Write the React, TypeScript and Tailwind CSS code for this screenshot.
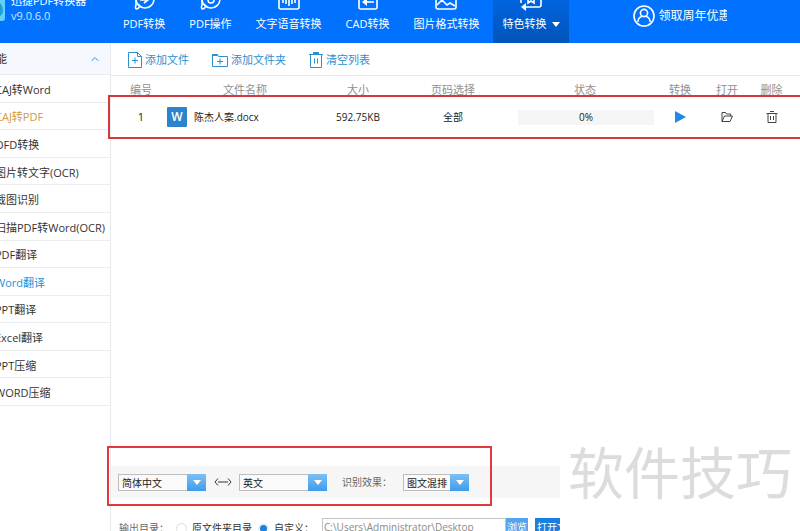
import type { ReactNode } from "react";
import { ChevronUp } from "lucide-react";

const TABS: { label: string; icon: ReactNode; active?: boolean }[] = [
  {
    label: "PDF转换",
    icon: (
      <>
        <path d="M3 2v14c-2 5 2 5 4 1" />
        <path d="M3 10a9 9 0 0 0 18 0M5 15q3 4 7 4" />
        <path d="M7 11h7M11 7l4 4-4 3" />
      </>
    ),
  },
  {
    label: "PDF操作",
    icon: (
      <>
        <path d="M3 2v14c-2 5 2 5 4 1" />
        <path d="M3 10a9 9 0 0 0 18 0M5 15q3 4 7 4" />
        <circle cx="12" cy="11" r="3" />
      </>
    ),
  },
  {
    label: "文字语音转换",
    icon: (
      <>
        <rect x="1" y="2" width="20" height="18" rx="2" />
        <path d="M5 10v4M8 8v7M11 9v8M14 8v7M17 10v4" />
      </>
    ),
  },
  {
    label: "CAD转换",
    icon: (
      <>
        <rect x="2" y="2" width="18" height="18" rx="2" />
        <path d="M17 13H9" />
        <path d="M10 9v8l-5-4z" fill="white" stroke="none" />
      </>
    ),
  },
  {
    label: "图片格式转换",
    icon: (
      <>
        <rect x="1" y="2" width="20" height="18" rx="2" />
        <path d="M2 16l5-5 5 5 3-2 5 3" />
      </>
    ),
  },
  {
    label: "特色转换",
    active: true,
    icon: (
      <>
        <path d="M21 6v10q0 2-2 2H3M1 14V6" />
        <path d="M6 14v8l-5-4z" fill="white" stroke="none" />
        <path d="M8 8v6l3-2 3 2V8" />
      </>
    ),
  },
];

const FEATURES: { label: string; tone?: string }[] = [
  { label: "CAJ转Word" },
  { label: "CAJ转PDF", tone: "text-[#d09a45]" },
  { label: "OFD转换" },
  { label: "图片转文字(OCR)" },
  { label: "截图识别" },
  { label: "扫描PDF转Word(OCR)" },
  { label: "PDF翻译" },
  { label: "Word翻译", tone: "text-[#2b8fd8]" },
  { label: "PPT翻译" },
  { label: "Excel翻译" },
  { label: "PPT压缩" },
  { label: "WORD压缩" },
];

export default function App() {
  return (
    <div className="relative flex h-screen flex-col overflow-hidden bg-white font-['Open_Sans','Noto_Sans_CJK_SC',sans-serif] text-[11px] leading-4 text-[#333]">
      <TopBar />
      <div className="flex min-h-0 flex-1">
        <Sidebar />
        <main className="flex min-w-0 flex-1 flex-col">
          <Toolbar />
          <FileTable />
          <Options />
        </main>
      </div>
      <div className="pointer-events-none absolute -right-1 left-[108px] top-[95px] h-[44px] border-2 border-[#d23b3b]" />
      <div className="pointer-events-none absolute bottom-[25px] left-[107px] h-[60px] w-[385px] border-2 border-[#e03a3e]" />
      <div className="pointer-events-none absolute bottom-[25px] right-2 text-[56px] leading-[68px] text-[#dcdcdc]">
        软件技巧
      </div>
    </div>
  );
}

function TopBar() {
  return (
    <header className="flex h-[43px] shrink-0 bg-[#0072ff] text-white">
      <div className="flex w-[111px] shrink-0 items-end gap-[6px] overflow-hidden">
        <svg viewBox="0 0 5 30" className="mb-[22px] h-[30px] w-[5px] shrink-0" fill="none">
          <path d="M0 0h5v27q0 3-3 3H0z" fill="#62d0fb" />
          <path d="M0 12q3 3 3 7t-3 6" fill="#1ba3d8" />
        </svg>
        <div className="mb-[20px] whitespace-nowrap">
          <div className="leading-[15px]">迅捷PDF转换器</div>
          <div className="leading-[15px] text-[#cfe5ff]">v9.0.6.0</div>
        </div>
      </div>
      <nav className="flex shrink-0">
        {TABS.map((tab) => (
          <button
            key={tab.label}
            type="button"
            className={`flex h-[43px] flex-col items-center justify-end overflow-hidden pb-[11px] ${
              tab.active ? "ml-[2px] bg-linear-to-b from-[#0064e0] to-[#0055b8] px-[9px]" : "px-[12px]"
            }`}
          >
            <svg
              viewBox="0 0 22 24"
              className="mb-[3px] h-[24px] w-[22px] shrink-0"
              fill="none"
              stroke="white"
              strokeWidth="1.6"
            >
              {tab.icon}
            </svg>
            <span className="flex items-center gap-[6px] whitespace-nowrap">
              {tab.label}
              {tab.active && (
                <svg viewBox="0 0 8 5" className="h-[5px] w-[8px]" fill="white">
                  <path d="M0 0h8L4 5z" />
                </svg>
              )}
            </span>
          </button>
        ))}
      </nav>
      <a href="#account" className="ml-[64px] mt-[5px] flex h-[22px] items-center gap-[3px] text-[12px]">
        <svg viewBox="0 0 22 22" className="size-[22px]" fill="none" stroke="white" strokeWidth="1.6">
          <circle cx="11" cy="11" r="10" />
          <circle cx="11" cy="8" r="3.6" />
          <path d="M5 17c0-3 2-5 4-5.500M17 17c0-3-2-5-4-5.500" />
        </svg>
        <span className="w-[69px] overflow-hidden whitespace-nowrap">领取周年优惠</span>
      </a>
    </header>
  );
}

function Sidebar() {
  return (
    <aside className="w-[111px] shrink-0 overflow-hidden border-r border-[#e6eaee]">
      <button
        type="button"
        className="flex h-[32px] w-full items-center justify-between border-b border-[#e6eaee] bg-[#f5f9fe] pr-[9px] pt-px"
      >
        <span className="-ml-[15px]">功能</span>
        <ChevronUp className="size-[12px] text-[#2b8fd8]" strokeWidth={2} />
      </button>
      <ul className="grid h-[331px] auto-rows-fr">
        {FEATURES.map((item) => (
          <li key={item.label} className="flex items-center border-b border-[#e9edf0] pt-[3px]">
            <a href="#feature" className={`-ml-[5px] whitespace-nowrap ${item.tone ?? ""}`}>
              {item.label}
            </a>
          </li>
        ))}
      </ul>
    </aside>
  );
}

function Toolbar() {
  const button = "flex items-center gap-[3px] whitespace-nowrap";
  return (
    <div className="flex h-[33px] shrink-0 items-center gap-[23px] border-b border-[#e6eaee] pl-[17px] pt-[2px] text-[#2b8fd0]">
      <button type="button" className={button}>
        <svg viewBox="0 0 14 16" className="h-[16px] w-[14px]" fill="none" stroke="currentColor">
          <path d="M.5.5h9l4 4v11H.5zM9.500.5v4h4M7 5.500v6M4 8.500h6" />
        </svg>
        添加文件
      </button>
      <button type="button" className={button}>
        <svg viewBox="0 0 16 14" className="h-[14px] w-[16px]" fill="none" stroke="currentColor">
          <path d="M.5 1.500h5l1 2h9v10H.5zM8 5.500v6M5 8.500h6" />
          <path d="M.5 2h5" strokeWidth="2" />
        </svg>
        添加文件夹
      </button>
      <button type="button" className={button}>
        <svg viewBox="0 0 14 16" className="h-[16px] w-[14px]" fill="none" stroke="currentColor">
          <path d="M1.500 3v12.500h11V3M0 2.500h14M5.500 6.500v5M8.500 6.500v5" />
          <path d="M4 1h6" strokeWidth="2" />
        </svg>
        清空列表
      </button>
    </div>
  );
}

function FileTable() {
  return (
    <table className="w-full table-fixed text-center">
      <colgroup>
        <col className="w-[56px]" />
        <col className="w-[152px]" />
        <col className="w-[78px]" />
        <col className="w-[112px]" />
        <col />
        <col className="w-[38px]" />
        <col className="w-[56px]" />
        <col className="w-[45px]" />
      </colgroup>
      <thead className="text-[#909090]">
        <tr className="h-[28px]">
          <th className="pl-1 font-normal">编号</th>
          <th className="pl-1 font-normal">文件名称</th>
          <th className="font-normal">大小</th>
          <th className="font-normal">页码选择</th>
          <th className="font-normal">状态</th>
          <th className="font-normal">转换</th>
          <th className="font-normal">打开</th>
          <th className="pr-3 font-normal">删除</th>
        </tr>
      </thead>
      <tbody className="text-[10px] text-[#222]">
        <tr className="h-[26px]">
          <td className="pl-1 text-[11px]">1</td>
          <td>
            <div className="flex items-center gap-[7px]">
              <span className="flex size-[20px] items-center justify-center rounded-[1px] bg-[#2d83cc] text-[12px] font-semibold text-white">
                W
              </span>
              陈杰人案.docx
            </div>
          </td>
          <td>592.75KB</td>
          <td>全部</td>
          <td className="pl-[9px] pr-[7px]">
            <div className="h-[15px] bg-[#f5f5f5] leading-[15px]">0%</div>
          </td>
          <td>
            <button type="button" aria-label="转换" className="block w-full">
              <svg viewBox="0 0 11 12" className="mx-auto h-[12px] w-[11px]" fill="#2489e6">
                <path d="M0 0l11 6-11 6z" />
              </svg>
            </button>
          </td>
          <td>
            <button type="button" aria-label="打开" className="block w-full">
              <svg viewBox="0 0 12 12" className="mx-auto size-[12px]" fill="none" stroke="#444">
                <path d="M1 10.500V1.500h3.500l1 1.500h4v2M1 10.500L3.500 5h8L9 10.500z" />
              </svg>
            </button>
          </td>
          <td className="pr-3">
            <button type="button" aria-label="删除" className="block w-full">
              <svg viewBox="0 0 12 12" className="mx-auto size-[12px]" fill="none" stroke="#444">
                <path d="M2 2.500v9h8v-9M.5 2.500h11M4 .5h4M4.500 5v4M7.500 5v4" />
              </svg>
            </button>
          </td>
        </tr>
      </tbody>
    </table>
  );
}

function Options() {
  const radio =
    "mr-[5px] size-[11px] appearance-none rounded-full border border-[#ddd] bg-white checked:border-[2px] checked:border-[#e6f1fb] checked:bg-[#1b7fe0]";
  return (
    <div className="mt-auto w-[449px] text-[10px]">
      <div className="flex h-[32px] items-center bg-[#f6f6f6] pl-[7px]">
        <Dropdown label="源语言" value="简体中文" width="w-[88px]" />
        <svg viewBox="0 0 18 8" className="ml-[8px] mr-[7px] h-[8px] w-[18px]" fill="none" stroke="#333">
          <path d="M4 .5L1 4l3 3.500M14 .5L17 4l-3 3.500M4 4h10" />
        </svg>
        <Dropdown label="目标语言" value="英文" width="w-[88px]" />
        <label htmlFor="识别效果" className="ml-[15px] w-[61px] text-[#666]">
          识别效果：
        </label>
        <Dropdown label="识别效果" value="图文混排" width="w-[66px]" />
      </div>
      <div className="mt-[20px] flex h-[13px] overflow-hidden pl-[8px]">
        <span className="mt-[2px] w-[57px] shrink-0 whitespace-nowrap text-[#666]">输出目录：</span>
        <label className="mt-[2px] flex h-[16px] w-[82px] shrink-0 items-center whitespace-nowrap">
          <input type="radio" name="output" className={radio} />
          原文件夹目录
        </label>
        <label className="mt-[2px] flex h-[16px] w-[64px] shrink-0 items-center whitespace-nowrap">
          <input type="radio" name="output" defaultChecked className={radio} />
          自定义：
        </label>
        <input
          aria-label="输出目录"
          defaultValue="C:\Users\Administrator\Desktop"
          className="h-[17px] min-w-0 flex-1 border border-[#c4c4c4] px-px text-[#8a8a8a]"
        />
        <button type="button" className="h-[17px] w-[22px] shrink-0 bg-[#55a5ee] text-white">
          浏览
        </button>
        <button
          type="button"
          className="ml-[7px] h-[17px] w-[25px] shrink-0 overflow-hidden whitespace-nowrap bg-[#1b7fe0] pl-[2px] text-left text-white"
        >
          打开文件夹
        </button>
      </div>
    </div>
  );
}

function Dropdown({ label, value, width }: { label: string; value: string; width: string }) {
  return (
    <div className={`relative h-[17px] shrink-0 ${width}`}>
      <select
        id={label}
        aria-label={label}
        className="block h-full w-full appearance-none border border-[#bdbdbd] bg-[#fafafa] pl-[3px] text-[#222]"
      >
        <option>{value}</option>
      </select>
      <span className="pointer-events-none absolute inset-y-0 right-0 flex w-[19px] items-center justify-center bg-linear-to-b from-[#7cc0f5] to-[#3d9bea]">
        <svg viewBox="0 0 8 5" className="h-[5px] w-[8px]" fill="white">
          <path d="M0 0h8L4 5z" />
        </svg>
      </span>
    </div>
  );
}
